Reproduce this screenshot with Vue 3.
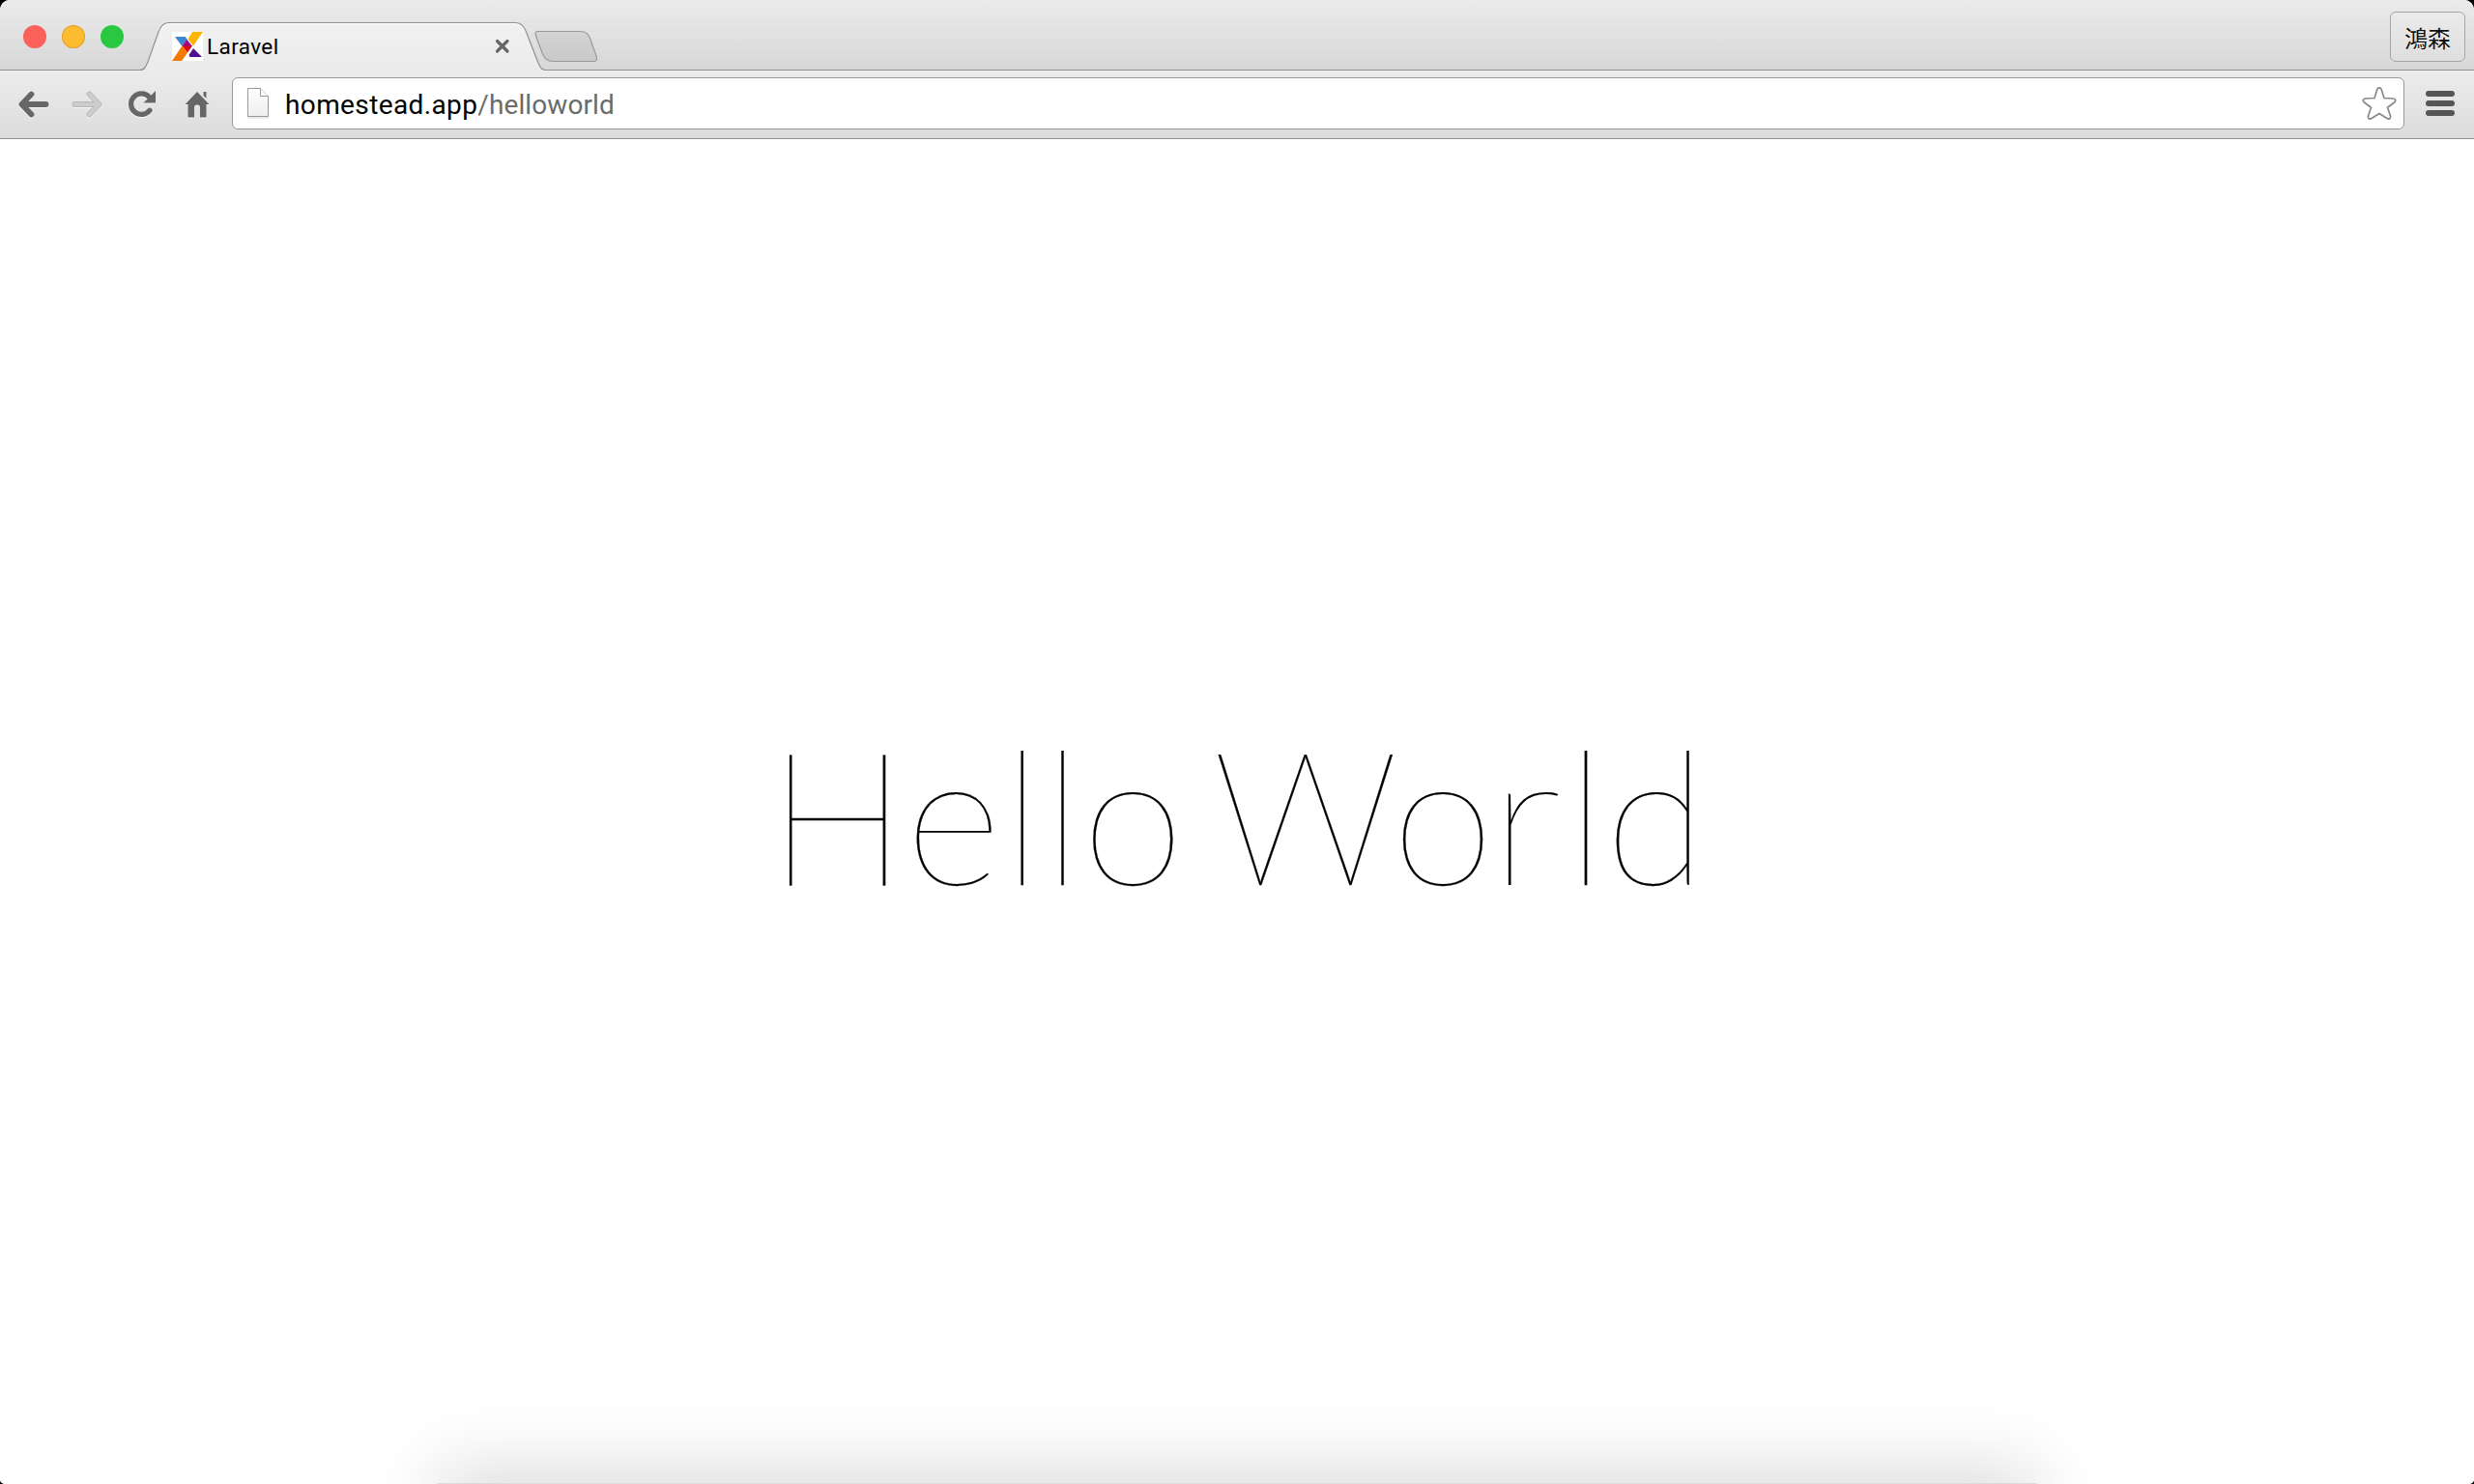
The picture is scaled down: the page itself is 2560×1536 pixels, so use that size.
<script setup>
const lights = ['close', 'minimize', 'maximize']
</script>

<template>
  <div class="desktop">
    <div class="window">
      <header class="strip">
        <div class="lights">
          <span v-for="l in lights" :key="l" class="light" :class="l"></span>
        </div>
        <div class="tab">
          <svg class="tab-shape" width="430" height="50" viewBox="0 0 430 50">
            <defs>
              <linearGradient id="tabFill" x1="0" y1="0" x2="0" y2="1">
                <stop offset="0" stop-color="#f1f1f1" />
                <stop offset="1" stop-color="#ebebeb" />
              </linearGradient>
            </defs>
            <path d="M0 50V49.500C4 49.500 5.500 47 8 41L19 10C22 3 24.500 .5 31 .5H387C394 .5 396.500 3 399.500 10L411.500 41C413.500 46 415 49.500 420 49.500H430V50Z" fill="url(#tabFill)" />
            <path d="M0 49.500C4 49.500 5.500 47 8 41L19 10C22 3 24.500 .5 31 .5H387C394 .5 396.500 3 399.500 10L411.500 41C413.500 46 415 49.500 420 49.500H430" fill="none" stroke="#929292" stroke-width="1.200" />
            <path d="M21 10C24 3.500 26 1.800 31 1.800H387C393 1.800 395 4.500 397.500 10" fill="none" stroke="#fff" stroke-opacity=".8" />
          </svg>
          <div class="tab-body">
            <svg class="favicon" width="32" height="30" viewBox="0 0 32 30">
              <rect width="32" height="30" fill="#fff" />
              <path d="M21 0H32L22 14.500L16.500 7.500Z" fill="#ffb400" />
              <path d="M3 5H13.500L16 8L10.500 15Z" fill="#3d85cc" />
              <path d="M15.500 8L21 15L10.500 15Z" fill="#a5007d" />
              <path d="M10.500 14.500H21L16 21.500Z" fill="#dc0a14" />
              <path d="M10.500 14.500L16 21.500L10 30H0Z" fill="#f57a00" />
              <path d="M22 17L31 26H18.500L17.500 24Z" fill="#4f118c" />
            </svg>
            <span class="title">Laravel</span>
            <svg class="close-x" width="16" height="16" viewBox="0 0 16 16">
              <path d="M2.500 2.500L13 13M13 2.500L2.500 13" stroke="#666" stroke-width="3.200" stroke-linecap="round" />
            </svg>
          </div>
        </div>
        <svg class="new-tab" width="66" height="34" viewBox="0 0 66 34">
          <defs>
            <linearGradient id="newFill" x1="0" y1="0" x2="0" y2="1">
              <stop offset="0" stop-color="#d4d4d4" />
              <stop offset="1" stop-color="#c9c9c9" />
            </linearGradient>
          </defs>
          <path d="M3.500 1.500H47C53 1.500 55.500 3.500 57.500 8.500L64 27C65 30 64.500 32.500 61.500 32.500H19C13 32.500 10.500 29.500 8.500 25L1.500 6C.5 3 1 1.500 3.500 1.500Z" fill="url(#newFill)" stroke="#999" stroke-width="1.200" />
        </svg>
        <div class="profile">鴻森</div>
      </header>

      <nav class="toolbar">
        <svg class="back" width="32" height="28" viewBox="0 0 32 28">
          <path d="M28.500 14H4M13.500 3.500L3.500 14L13.500 24.500" fill="none" stroke="#666" stroke-width="5.800" stroke-linecap="round" stroke-linejoin="round" />
        </svg>
        <svg class="forward" width="32" height="28" viewBox="0 0 32 28">
          <path d="M3.500 14H28M18.500 3.500L28.500 14L18.500 24.500" fill="none" stroke="#b8b8b8" stroke-width="5.800" stroke-linecap="round" stroke-linejoin="round" />
          <path d="M3.500 14H28M18.500 3.500L28.500 14L18.500 24.500" fill="none" stroke="#cdcdcd" stroke-width="4" stroke-linecap="round" stroke-linejoin="round" />
        </svg>
        <svg class="reload" width="28" height="28" viewBox="0 0 28 28">
          <path d="M22 20.200A10.800 10.800 0 1 1 21.500 6.500" fill="none" stroke="#666" stroke-width="5.200" stroke-linecap="round" />
          <path d="M28 0V12.500H15.500Z" fill="#666" />
        </svg>
        <svg class="home" width="26" height="28" viewBox="0 0 26 28">
          <path d="M13 1L25.500 14H22.500V27.500H16V17.500Q16 14.500 13 14.500Q10 14.500 10 17.500V27.500H3.500V14H.5Z" fill="#666" />
          <path d="M19.500 1H22.500V8L19.500 5Z" fill="#666" />
        </svg>
        <div class="omnibox">
          <svg class="page-icon" width="24" height="34" viewBox="0 0 24 34">
            <defs>
              <linearGradient id="pageFill" x1="0" y1="0" x2="0" y2="1">
                <stop offset="0" stop-color="#fefefe" />
                <stop offset="1" stop-color="#eee" />
              </linearGradient>
            </defs>
            <path d="M1 32H23" stroke="#e4e4e4" stroke-width="1.500" />
            <path d="M1.500 1.500H14.500L22.500 9.500V30.500H1.500Z" fill="url(#pageFill)" stroke="#999" />
            <path d="M14.500 1.500V9.500H22.500" fill="#fff" stroke="#999" />
          </svg>
          <span class="url"><b>homestead.app</b><i>/helloworld</i></span>
          <svg class="star" width="36" height="36" viewBox="0 0 36 36">
            <path d="M15.700 3.700C16.500 1.200 19.500 1.200 20.300 3.700L23 12.500L32.500 13C35 13.200 35.500 15.500 33.600 17L26.500 22.300L29.500 31C30.200 33.500 28 35 26 33.500L18 28.500L10 33.500C8 35 5.800 33.500 6.500 31L9.500 22.300L2.400 17C.5 15.500 1 13.200 3.500 13L13 12.500Z" fill="#fff" stroke="#888" stroke-width="1.700" stroke-linejoin="round" />
          </svg>
        </div>
        <div class="menu"><span></span><span></span><span></span></div>
      </nav>

      <main class="page">
        <h1><span class="loose">Hel</span>lo <span class="wo">Wo</span><span class="r">r</span>ld</h1>
        <div class="dock-shadow"></div>
      </main>
    </div>
  </div>
</template>

<style>
body { margin: 0; background: #000; }
</style>

<style scoped>
.desktop { width: 2560px; height: 1536px; background: #000; overflow: hidden; }
.window {
  width: 2560px; height: 1536px; display: flex; flex-direction: column;
  background: #fff; border-radius: 10px 10px 5px 5px; overflow: hidden;
  font-family: Roboto, "Noto Sans CJK TC", sans-serif;
}
.strip {
  box-sizing: border-box; height: 73px; flex: none; display: flex; align-items: flex-start;
  background: linear-gradient(#ebebeb, #d7d7d7); border-bottom: 1px solid #929292;
}
.lights { display: flex; gap: 16px; padding: 26px 0 0 24px; width: 121px; }
.light { width: 24px; height: 24px; border-radius: 50%; }
.close { background: #fc605b; }
.minimize { background: #fdbc2f; box-shadow: inset 0 0 0 1px #e0a036; }
.maximize { background: #28c940; }
.tab { position: relative; width: 430px; height: 50px; margin-top: 23px; flex: none; z-index: 1; }
.tab-shape { position: absolute; left: 0; top: 0; }
.tab-body { position: relative; display: flex; align-items: center; height: 50px; padding: 0 47px 0 33px; }
.favicon { flex: none; }
.title { flex: 1; margin-left: 4px; font-size: 22.500px; line-height: 50px; color: #000; letter-spacing: .4px; }
.close-x { margin-top: -1px; }
.new-tab { margin: 31px 0 0 -22px; position: relative; z-index: 2; }
.profile {
  box-sizing: border-box; width: 78px; height: 52px; margin: 12px 9px 0 auto;
  border: 1.500px solid #a5a5a5; border-radius: 6px; background: linear-gradient(#ebebeb, #dedede);
  font: 24px/52px "Noto Sans CJK TC", sans-serif; color: #111; text-align: center;
  text-shadow: 0 1px 0 #fff;
}
.toolbar {
  box-sizing: border-box; height: 71px; flex: none; display: flex; align-items: flex-start;
  padding: 7px 20px 0 19px; background: linear-gradient(#ececec, #dcdcdc);
  border-bottom: 1px solid #8d8d8d;
}
.toolbar > svg { margin-top: 14px; filter: drop-shadow(0 1px 0 #f6f6f6); }
.forward { margin-left: 23px; }
.reload { margin-left: 27px; }
.home { margin-left: 30px; }
.omnibox {
  box-sizing: border-box; flex: 1; height: 54px; margin-left: 23px; display: flex; align-items: center;
  padding: 0 7px 0 14px; background: #fff; border: 1px solid #989898; border-radius: 6px;
}
.url { flex: 1; margin-left: 16px; padding-top: 3px; font-size: 28px; line-height: 49px; white-space: nowrap; }
.url b { font-weight: 400; color: #000; letter-spacing: .38px; }
.url i { font-style: normal; color: #6b6b6b; letter-spacing: .1px; }
.menu { display: flex; flex-direction: column; gap: 4px; margin: 14px 0 0 22px; }
.menu span { width: 30px; height: 6px; border-radius: 3px; background: #555; }
.page { position: relative; flex: 1; display: flex; align-items: center; justify-content: center; background: #fff; overflow: hidden; }
h1 {
  margin: 0; padding-top: 4px; font: 100 192px/1.2 Lato, sans-serif; color: #000;
  white-space: nowrap; word-spacing: -25px; -webkit-text-stroke: .25px #000;
}
.loose { letter-spacing: 1.800px; }
.wo { letter-spacing: 2px; margin-right: -5px; }
.r { display: inline-block; margin-right: 12px; transform: scaleX(1.140); transform-origin: 16px 50%; -webkit-text-stroke: 0; }
.dock-shadow {
  position: absolute; left: 453px; right: 453px; top: 1391px; height: 80px;
  background: #dcdcdc; box-shadow: 0 -14px 76px rgba(0, 0, 0, .15);
}
</style>
